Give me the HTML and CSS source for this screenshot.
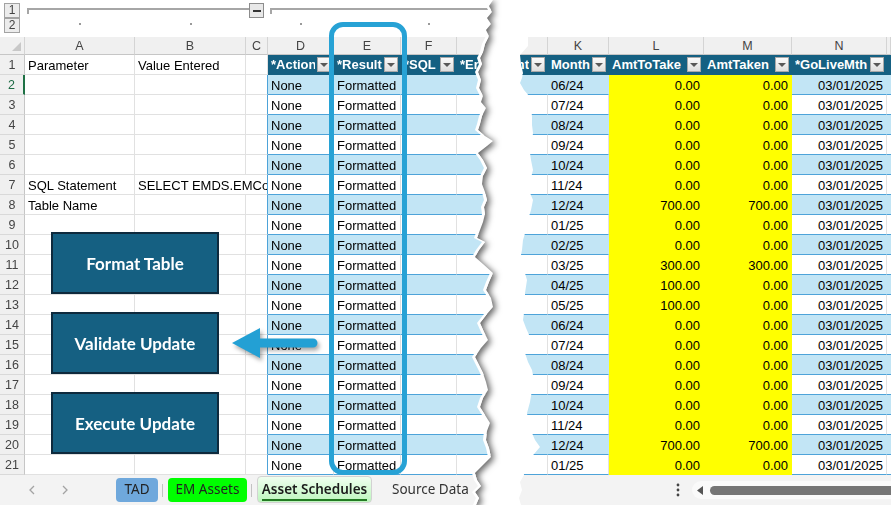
FILE: index.html
```html
<!DOCTYPE html>
<html lang="en">
<head>
    <meta charset="UTF-8">
    <meta name="viewport" content="width=device-width, initial-scale=1.0">
    <title>Asset Schedules</title>
    <link rel="stylesheet" href="styles.css">
</head>
<body>
<div class="window">
    <div class="left-wrap">
        <div class="pane left">
            <div class="outline">
                <div class="lvl">1</div>
                <div class="group first"><span class="line"></span><span class="collapse"><span class="minus"></span></span></div>
                <div class="group second"><span class="line"></span></div>
                <div class="lvl">2</div>
                <div class="dot"></div>
                <div class="dot"></div>
                <div></div>
                <div class="dot"></div>
                <div class="dot"></div>
                <div class="dot"></div>
                <div></div>
            </div>

            <div class="sheet" id="leftSheet">
                <div class="ch corner"></div>
                <div class="ch">A</div>
                <div class="ch">B</div>
                <div class="ch">C</div>
                <div class="ch">D</div>
                <div class="ch">E</div>
                <div class="ch">F</div>
                <div class="ch"></div>

                <div class="rn">1</div>
                <div class="c">Parameter</div>
                <div class="c">Value Entered</div>
                <div class="c"></div>
                <div class="c th"><span>*Action</span><i class="dd"></i></div>
                <div class="c th"><span>*Result</span><i class="dd"></i></div>
                <div class="c th"><span>*SQL</span><i class="dd"></i></div>
                <div class="c th"><span>*Error</span></div>
            </div>

            <div class="tabbar">
                <div class="tabnav">
                    <svg width="7" height="10" viewBox="0 0 7 10"><path d="M6 1 L2 5 L6 9" fill="none" stroke="#a3a3a3" stroke-width="1.3"/></svg>
                    <svg width="7" height="10" viewBox="0 0 7 10"><path d="M1 1 L5 5 L1 9" fill="none" stroke="#a3a3a3" stroke-width="1.3"/></svg>
                </div>
                <div class="tab tad">TAD</div>
                <span class="sep"></span>
                <div class="tab em">EM Assets</div>
                <span class="sep"></span>
                <div class="tab active"><span>Asset Schedules</span></div>
                <div class="tab plain">Source Data</div>
            </div>

            <div class="buttons">
                <div class="macro">Format Table</div>
                <div class="macro">Validate Update</div>
                <div class="macro">Execute Update</div>
            </div>

            <svg class="arrow" width="96" height="40" viewBox="0 0 96 40">
                <path d="M4 17 L32 2 L32 12.5 L85 12.5 A4.5 4.5 0 0 1 85 21.5 L32 21.5 L32 32 Z" fill="#23a0d4"/>
            </svg>

            <div class="callout"></div>
        </div>
    </div>

    <div class="pane right">
        <div class="blank"></div>
        <div class="sheet" id="rightSheet">
            <div class="ch"></div>
            <div class="ch">K</div>
            <div class="ch">L</div>
            <div class="ch">M</div>
            <div class="ch">N</div>
            <div class="ch"></div>

            <div class="c th end"><span>Amt</span><i class="dd"></i></div>
            <div class="c th"><span>Month</span><i class="dd"></i></div>
            <div class="c th"><span>AmtToTake</span><i class="dd"></i></div>
            <div class="c th"><span>AmtTaken</span><i class="dd"></i></div>
            <div class="c th"><span>*GoLiveMth</span><i class="dd"></i></div>
            <div class="c th"></div>
        </div>
        <div class="tabbar">
            <svg class="more" width="4" height="14" viewBox="0 0 4 14"><circle cx="2" cy="2" r="1.4" fill="#444"/><circle cx="2" cy="7" r="1.4" fill="#444"/><circle cx="2" cy="12" r="1.4" fill="#444"/></svg>
            <div class="track">
                <svg width="6" height="9" viewBox="0 0 6 9"><path d="M6 0 L0 4.5 L6 9 Z" fill="#555"/></svg>
                <div class="thumb"></div>
            </div>
        </div>
    </div>
</div>

<script>
    // Build the sheet rows
    function cell(parent, cls, text) {
        const d = document.createElement('div');
        d.className = cls;
        if (text !== undefined) d.textContent = text;
        parent.appendChild(d);
        return d;
    }

    const leftSheet = document.getElementById('leftSheet');
    for (let r = 2; r <= 21; r++) {
        const band = r % 2 === 0 ? ' band' : '';
        cell(leftSheet, r === 2 ? 'rn sel' : 'rn', r);
        cell(leftSheet, 'c', r === 7 ? 'SQL Statement' : r === 8 ? 'Table Name' : '');
        if (r === 7) {
            cell(leftSheet, 'c span2 edge', 'SELECT EMDS.EMCo');
        } else {
            cell(leftSheet, 'c');
            cell(leftSheet, 'c edge');
        }
        cell(leftSheet, 'c t' + band, 'None');
        cell(leftSheet, 'c t' + band, 'Formatted');
        cell(leftSheet, 'c t' + band);
        cell(leftSheet, 'c t' + band);
    }

    const months = ['06/24', '07/24', '08/24', '09/24', '10/24', '11/24', '12/24', '01/25', '02/25', '03/25',
                    '04/25', '05/25', '06/24', '07/24', '08/24', '09/24', '10/24', '11/24', '12/24', '01/25'];
    const toTake = [0, 0, 0, 0, 0, 0, 700, 0, 0, 300, 100, 100, 0, 0, 0, 0, 0, 0, 700, 0];
    const taken  = [0, 0, 0, 0, 0, 0, 700, 0, 0, 300, 0, 0, 0, 0, 0, 0, 0, 0, 700, 0];

    const rightSheet = document.getElementById('rightSheet');
    months.forEach(function (m, i) {
        const band = i % 2 === 0 ? ' band' : '';
        cell(rightSheet, 'c t' + band);
        cell(rightSheet, 'c t' + band, m);
        cell(rightSheet, 'c yel', toTake[i].toFixed(2));
        cell(rightSheet, 'c yel', taken[i].toFixed(2));
        cell(rightSheet, 'c t num' + band, '03/01/2025');
        cell(rightSheet, 'c t' + band);
    });
</script>
</body>
</html>
```

FILE: styles.css
```css
* {
    box-sizing: border-box;
}
body {
    margin: 0;
    background: #fff;
    font-family: "Liberation Sans", Arial, sans-serif;
    font-size: 13px;
    color: #000;
}
.window {
    display: flex;
    width: 891px;
    height: 505px;
    overflow: hidden;
}

/* torn panes */
.left-wrap {
    width: 500px;
    flex: none;
    filter: drop-shadow(3px 0 0 #fff) drop-shadow(3px 2px 3px rgba(0, 0, 0, 0.6));
}
.pane {
    height: 505px;
    display: flex;
    flex-direction: column;
    background: #fff;
}
.left {
    position: relative;
    width: 500px;
    clip-path: polygon(0 0, 490px 0, 486px 6px, 489px 12px, 484px 18px, 488px 24px, 483px 30px, 486px 36px,
        482px 44px, 480px 52px, 477px 58px, 479px 64px, 475px 72px, 478px 80px, 476px 88px, 480px 96px,
        478px 102px, 483px 108px, 479px 116px, 477px 124px, 475px 130px, 482px 136px, 490px 141px,
        484px 146px, 475px 153px, 480px 160px, 484px 168px, 480px 176px, 479px 184px, 482px 192px,
        484px 200px, 481px 207px, 482px 214px, 480px 222px, 477px 230px, 474px 238px, 482px 242px,
        476px 250px, 472px 257px, 480px 264px, 490px 273px, 486px 282px, 483px 290px, 488px 298px,
        490px 307px, 484px 314px, 477px 323px, 481px 332px, 485px 340px, 478px 348px, 472px 357px,
        476px 365px, 480px 373px, 483px 382px, 485px 390px, 480px 398px, 477px 407px, 482px 415px,
        487px 423px, 484px 431px, 483px 440px, 486px 448px, 488px 457px, 480px 465px, 472px 473px,
        474px 480px, 478px 486px, 472px 492px, 476px 498px, 473px 505px, 0 505px);
}
.right {
    flex: 1;
    margin-left: 15px;
    clip-path: polygon(8px 0, 100% 0, 100% 100%, 6px 100%, 4px 498px, 7px 490px, 5px 482px, 9px 475px,
        8px 467px, 14px 460px, 25px 447px, 20px 440px, 17px 433px, 14px 423px, 12px 413px, 15px 402px,
        17px 390px, 19px 380px, 17px 370px, 13px 362px, 10px 353px, 12px 345px, 15px 337px, 11px 328px,
        8px 320px, 10px 306px, 10px 293px, 12px 280px, 9px 270px, 5px 260px, 7px 250px, 8px 240px,
        11px 230px, 13px 220px, 16px 210px, 18px 200px, 15px 193px, 12px 187px, 16px 178px, 18px 170px,
        16px 160px, 15px 153px, 17px 143px, 18px 133px, 17px 125px, 17px 117px, 16px 106px, 15px 97px,
        9px 90px, 5px 83px, 7px 78px, 8px 73px, 6px 64px, 5px 55px, 13px 46px, 13px 37px, 10px 20px, 8px 10px);
}
.blank {
    height: 37px;
}

/* outline (grouping) bar */
.outline {
    display: grid;
    grid-template-columns: 25px 110px 111px 22px 66px 67px 56px 43px;
    grid-template-rows: 18px 19px;
}
.lvl {
    width: 16px;
    height: 15px;
    margin-left: 4px;
    border: 1px solid #a3a3a3;
    background: #ececec;
    color: #444;
    font-size: 12px;
    line-height: 13px;
    text-align: center;
}
.outline .lvl:first-child {
    margin-top: 3px;
}
.group {
    display: flex;
    padding-left: 2px;
}
.group.first {
    grid-column: 2 / 5;
}
.group.second {
    grid-column: 5 / 9;
}
.group .line {
    flex: 1;
    height: 6px;
    margin-top: 8px;
    border-top: 2px solid #a6a6a6;
    border-left: 2px solid #a6a6a6;
}
.collapse {
    width: 15px;
    height: 15px;
    margin: 3px 4px 0 0;
    border: 1px solid #8c8c8c;
    background: #e8e8e8;
    display: flex;
    align-items: center;
    justify-content: center;
}
.minus {
    width: 8px;
    height: 2px;
    background: #333;
}
.dot {
    width: 2px;
    height: 2px;
    margin-top: 5px;
    justify-self: center;
    background: #9a9a9a;
}

/* sheet grid */
.sheet {
    display: grid;
    grid-template-rows: 18px repeat(21, 20px);
}
#leftSheet {
    grid-template-columns: 25px 110px 111px 22px 66px 67px 56px 43px;
}
#rightSheet {
    grid-template-columns: 33px 61px 95px 88px 95px 4px;
}
.ch {
    background: #f0f0f0;
    border-right: 1px solid #d4d4d4;
    border-bottom: 1px solid #c6c6c6;
    color: #444;
    font-size: 12.5px;
    line-height: 18px;
    text-align: center;
}
.corner {
    position: relative;
}
.corner::after {
    content: '';
    position: absolute;
    right: 3px;
    bottom: 3px;
    border-left: 9px solid transparent;
    border-bottom: 9px solid #c8c8c8;
}
.rn {
    background: #f0f0f0;
    border-right: 1px solid #c6c6c6;
    border-bottom: 1px solid #d9d9d9;
    color: #444;
    font-size: 12.5px;
    line-height: 21px;
    text-align: center;
    overflow: hidden;
}
.rn.sel {
    color: #1e6b45;
    border-right: 2px solid #1e7145;
}
.c {
    border-right: 1px solid #e1e1e1;
    border-bottom: 1px solid #e1e1e1;
    padding: 0 3px;
    line-height: 21px;
    white-space: nowrap;
    overflow: hidden;
}
.span2 {
    grid-column: span 2;
    padding-right: 0;
}
.edge {
    border-right-color: #4da3d9;
}
.th {
    display: flex;
    align-items: center;
    gap: 2px;
    padding: 0 2px 0 3px;
    background: #156082;
    border-color: #156082;
    color: #fff;
    font-weight: bold;
    line-height: 19px;
}
.th span {
    flex: 1;
    overflow: hidden;
}
.th.end {
    padding-left: 0;
}
.th.end span {
    direction: rtl;
    text-align: right;
}
.dd {
    flex: none;
    width: 14px;
    height: 15px;
    border: 1px solid #a9a9a9;
    background: linear-gradient(#fbfbfb, #dedede);
    display: flex;
    align-items: center;
    justify-content: center;
}
.dd::after {
    content: '';
    border-left: 4px solid transparent;
    border-right: 4px solid transparent;
    border-top: 4px solid #585858;
}
.t {
    border-bottom-color: #4da3d9;
}
.band {
    background: #c2e5f5;
    border-right-color: #c2e5f5;
}
.yel {
    background: #ffff00;
    border-color: #ffff00;
    text-align: right;
}
.num {
    text-align: right;
}

/* sheet tabs */
.tabbar {
    height: 30px;
    background: #f3f3f3;
    display: flex;
    align-items: center;
    font-family: "Noto Sans", "Open Sans", sans-serif;
    font-size: 13.5px;
    color: #222;
}
.tabnav {
    width: 116px;
    flex: none;
    display: flex;
    gap: 27px;
    padding-left: 28px;
}
.tab {
    height: 24px;
    line-height: 23px;
    text-align: center;
    border-radius: 4px;
    flex: none;
}
.tad {
    width: 42px;
    background: #6fa8dc;
}
.em {
    width: 79px;
    background: #00ff00;
}
.sep {
    width: 1px;
    height: 13px;
    margin: 0 5px 0 4px;
    background: #c2c2c2;
}
.active {
    width: 115px;
    height: 27px;
    margin-top: -2px;
    border: 1px solid #d2d2d2;
    background: linear-gradient(#effeef, #bdf6bd);
    font-weight: 600;
    color: #1b1b1b;
    line-height: 24px;
}
.active span {
    padding-bottom: 1px;
    border-bottom: 2px solid #237a23;
}
.plain {
    padding-left: 20px;
    color: #333;
}
.more {
    margin-left: 161px;
    flex: none;
}
.track {
    flex: 1;
    height: 18px;
    margin-left: 12px;
    border-radius: 9px 0 0 9px;
    background: #fafafa;
    display: flex;
    align-items: center;
    padding-left: 5px;
}
.thumb {
    flex: 1;
    height: 9px;
    margin-left: 7px;
    border-radius: 5px 0 0 5px;
    background: #757575;
}

/* shapes drawn over the sheet */
.buttons {
    position: absolute;
    left: 51px;
    top: 232px;
    display: flex;
    flex-direction: column;
    gap: 18px;
}
.macro {
    width: 168px;
    height: 62px;
    background: #156082;
    border: 2px solid #0e2a3d;
    color: #fff;
    font-family: Lato, "Open Sans", sans-serif;
    font-weight: bold;
    font-size: 17px;
    display: flex;
    align-items: center;
    justify-content: center;
}
.arrow {
    position: absolute;
    left: 228px;
    top: 326px;
    filter: drop-shadow(2px 3px 2px rgba(0, 0, 0, 0.35));
}
.callout {
    position: absolute;
    left: 329px;
    top: 22px;
    width: 78px;
    height: 453px;
    border: 5px solid #27a2d5;
    border-radius: 14px;
}
```
